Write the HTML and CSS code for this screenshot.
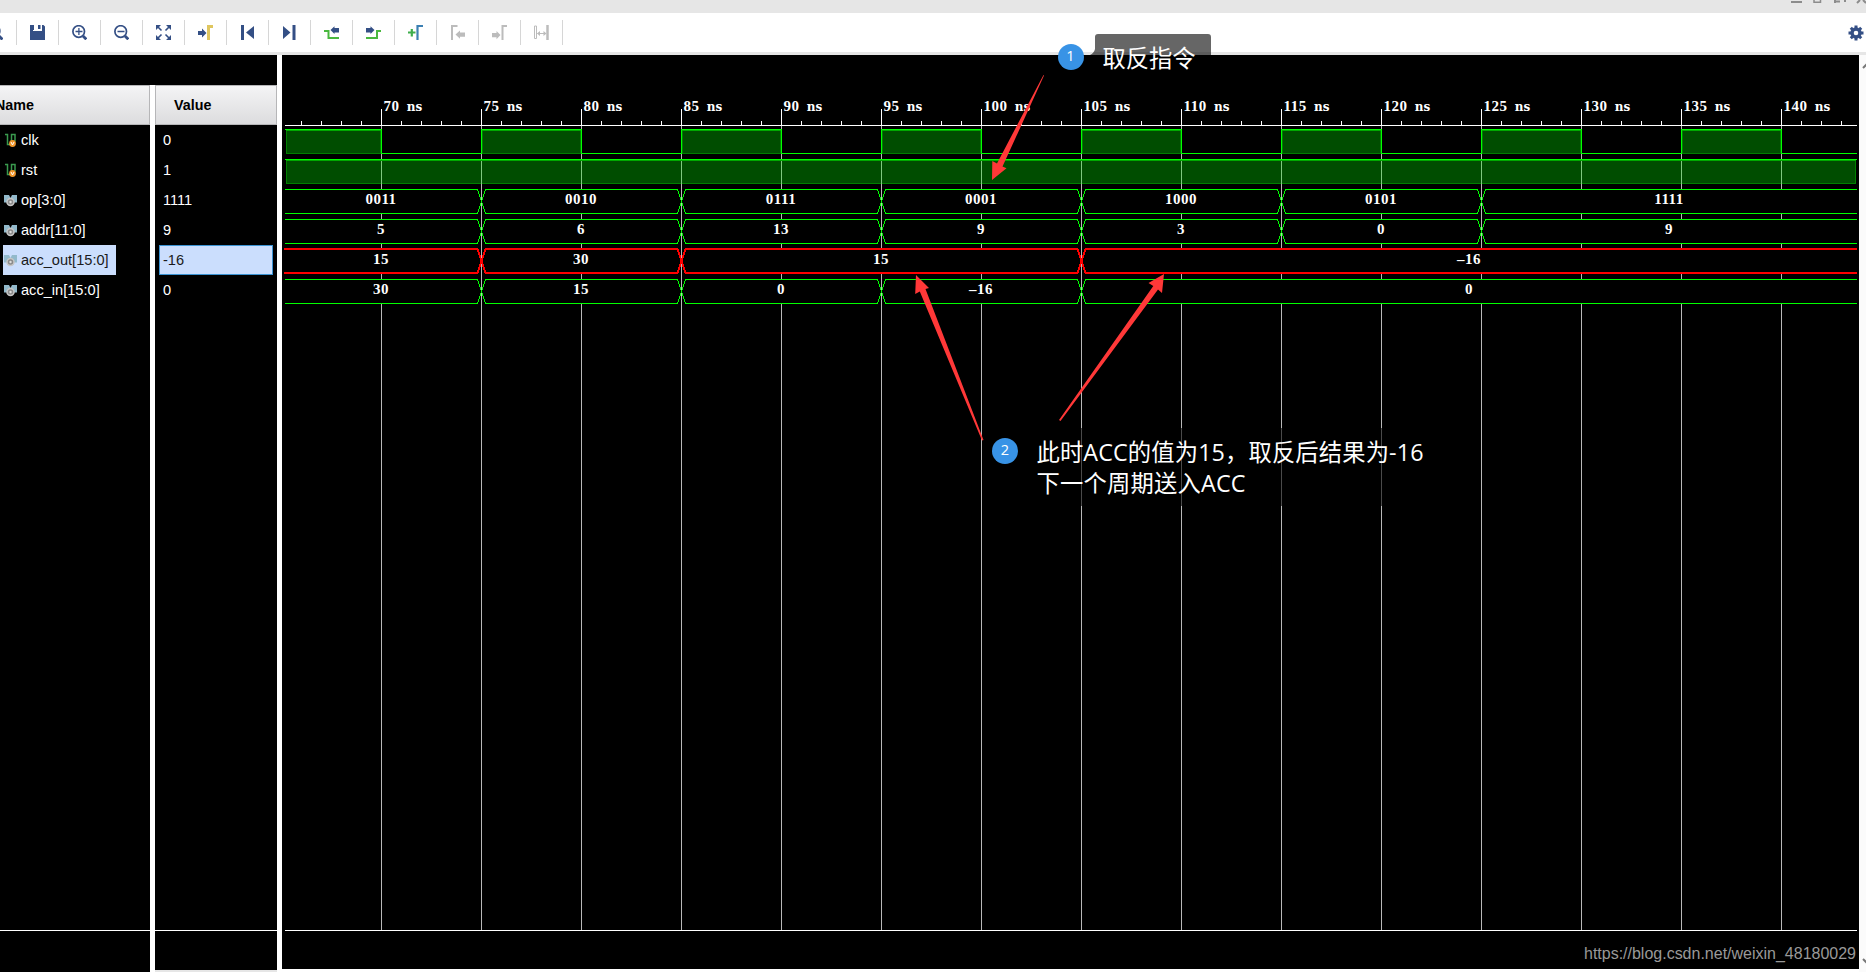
FILE: index.html
```html
<!DOCTYPE html>
<html>
<head>
<meta charset="UTF-8">
<title>Waveform</title>
<link rel="stylesheet" href="styles.css">
</head>
<body>

<div class="titlebar">
	<svg width="76" height="4" viewBox="1790 0 76 4" fill="none" stroke="#8c8c8c">
		<path d="M1791 2h11" stroke-width="2"/>
		<path d="M1814 0v2.3h6.5V0" stroke-width="1.5"/>
		<path d="M1835 1.5h5M1835 0v3M1845 0v2" stroke-width="2"/>
		<path d="M1857 3l3-3M1866 3l-3-3" stroke-width="2"/>
	</svg>
</div>

<div class="toolbar">
	<div class="tool first"><svg width="15" height="15" viewBox="0 0 15 15"><circle cx="6" cy="6" r="5.8" fill="none" stroke="#344f85" stroke-width="1.7"/><path d="M10.5 10.500l4 4" stroke="#344f85" stroke-width="3"/></svg></div>
	<div class="tool"><svg width="15" height="15" viewBox="0 0 15 15"><path d="M0 0h3v6h9V0h1.5L15 1.500V15H0z M8 0h2.500v4H8z M3 0h1v5h-1z" fill="#344f85"/></svg></div>
	<div class="tool"><svg width="15" height="15" viewBox="0 0 15 15"><g fill="none" stroke="#344f85"><circle cx="6.700" cy="6.500" r="5.800" stroke-width="1.700"/><path d="M11 11l3.300 3.300" stroke-width="2.800"/><path d="M3.500 6.500h7M6.900 3v7" stroke-width="1.300"/></g></svg></div>
	<div class="tool"><svg width="15" height="15" viewBox="0 0 15 15"><g fill="none" stroke="#344f85"><circle cx="6.700" cy="6.500" r="5.800" stroke-width="1.700"/><path d="M11 11l3.300 3.300" stroke-width="2.800"/><path d="M3.500 6.500h7" stroke-width="1.500"/></g></svg></div>
	<div class="tool"><svg width="15" height="15" viewBox="0 0 15 15"><path d="M0 0h5L0 5zM15 0h-5l5 5zM0 15h5l-5-5zM15 15h-5l5-5z" fill="#344f85"/><path d="M2 2l3.500 3.500M13 2L9.500 5.500M2 13l3.500-3.500M13 13L9.500 9.500" stroke="#344f85" stroke-width="1.600"/></svg></div>
	<div class="tool"><svg width="15" height="15" viewBox="0 0 15 15"><path d="M0 6h4V3.500l4.500 4.500L4 12.500V10H0z" fill="#344f85"/><path d="M10.500 15V1.500H15" fill="none" stroke="#dfc65f" stroke-width="3"/></svg></div>
	<div class="tool"><svg width="15" height="15" viewBox="0 0 15 15"><path d="M1 0h3v15H1zM14 1v13L6 7.500z" fill="#344f85"/></svg></div>
	<div class="tool"><svg width="15" height="15" viewBox="0 0 15 15"><path d="M10.500 0h3v15h-3zM1 1v13l7.500-6.500z" fill="#344f85"/></svg></div>
	<div class="tool"><svg width="15" height="15" viewBox="0 0 15 15"><path d="M0 6h4.500v7H15" fill="none" stroke="#4ab83f" stroke-width="2"/><path d="M6.500 5l4-3.800V3H15v4.500h-4.500V9z" fill="#344f85"/></svg></div>
	<div class="tool"><svg width="15" height="15" viewBox="0 0 15 15"><path d="M15 6h-4v7H0" fill="none" stroke="#4ab83f" stroke-width="2"/><path d="M8.500 5l-4-3.800V3H0v4.500h4.500V9z" fill="#344f85"/></svg></div>
	<div class="tool"><svg width="15" height="15" viewBox="0 0 15 15"><path d="M0 7.500h7.500M3.800 4v7.500" stroke="#3fae4d" stroke-width="2.200"/><path d="M9.500 15V1H15" fill="none" stroke="#3c80b3" stroke-width="2.200"/></svg></div>
	<div class="tool"><svg width="15" height="15" viewBox="0 0 15 15"><path d="M2 15V1h5.500" fill="none" stroke="#bcbcbc" stroke-width="2"/><path d="M5.500 9.500L10 5.500V7.500h5v4.300h-5v2z" fill="#bcbcbc"/></svg></div>
	<div class="tool"><svg width="15" height="15" viewBox="0 0 15 15"><path d="M10.500 15V1H15" fill="none" stroke="#bcbcbc" stroke-width="2"/><path d="M8.500 10L4.500 6v2H0v4.200h4.500v2z" fill="#bcbcbc"/></svg></div>
	<div class="tool"><svg width="15" height="15" viewBox="0 0 15 15"><path d="M.5 1h2v12.500h-2zM3.500 8.500h8" fill="none" stroke="#bcbcbc"/><path d="M13.500 0v15" stroke="#bcbcbc" stroke-width="2.500"/><path d="M3 8.500L6 6v5zM12.500 8.500L9.500 6v5z" fill="#bcbcbc"/></svg></div>
	<svg class="gear" width="16" height="16" viewBox="-8 -8 16 16"><circle r="4" fill="none" stroke="#344f85" stroke-width="3.400"/><path d="M0-7.500V-5M0 5v2.500M-7.500 0H-5M5 0h2.500M-5.200-5.200L-3.500-3.500M5.200 5.200L3.500 3.500M-5.200 5.200L-3.500 3.500M5.200-5.200L3.500-3.500" stroke="#344f85" stroke-width="3"/></svg>
</div>

<div class="main">
	<div class="signals">
		<div class="names">
			<div class="head">Name</div>
			<div class="row"><svg class="ico" width="13" height="16" viewBox="0 0 13 16"><use href="#wire"/></svg><span>clk</span></div>
			<div class="row"><svg class="ico" width="13" height="16" viewBox="0 0 13 16"><use href="#wire"/></svg><span>rst</span></div>
			<div class="row"><svg class="ico" width="13" height="16" viewBox="0 0 13 16"><use href="#bus"/></svg><span>op[3:0]</span></div>
			<div class="row"><svg class="ico" width="13" height="16" viewBox="0 0 13 16"><use href="#bus"/></svg><span>addr[11:0]</span></div>
			<div class="row selected"><svg class="ico" width="13" height="16" viewBox="0 0 13 16"><use href="#bus"/></svg><span>acc_out[15:0]</span></div>
			<div class="row"><svg class="ico" width="13" height="16" viewBox="0 0 13 16"><use href="#bus"/></svg><span>acc_in[15:0]</span></div>
			<div class="foot"></div>
		</div>
		<div class="values">
			<div class="head">Value</div>
			<div class="row">0</div>
			<div class="row">1</div>
			<div class="row">1111</div>
			<div class="row">9</div>
			<div class="row selected">-16</div>
			<div class="row">0</div>
			<div class="foot"></div>
		</div>
	</div>

	<div class="wave">
		<svg id="wave" width="1577" height="914" viewBox="282 55 1577 914"></svg>
	</div>

	<div class="scroll">
		<svg width="7" height="914" viewBox="0 0 7 914" fill="none" stroke="#777" stroke-width="2"><path d="M4 13l4-4M4 904l4 4"/></svg>
	</div>
</div>

<!-- annotations drawn over the whole window -->
<svg class="notes" width="1866" height="972">
	<g fill="#000" fill-opacity=".6">
		<path d="M1098 34h110a3 3 0 0 1 3 3v46h-116V55h-5q4-2 5-6V37a3 3 0 0 1 3-3z"/>
		<rect x="1026" y="428" width="412" height="78" rx="3"/>
	</g>
	<g fill="#ff3838">
		<path d="M992 180L992.300 161L997 163.500L1043.500 75L1044 75.500L1002.500 166.500L1006.500 168.300z"/>
		<path d="M916 275L915.200 294L919.800 291.500L982 440.500L983.500 440L925.500 289L929 288z"/>
		<path d="M1164 274L1148.500 283L1153.300 286L1059 420L1060.500 421L1158 289.500L1162 293z"/>
	</g>
	<circle cx="1071" cy="57" r="13" fill="#3893e6"/>
	<circle cx="1005" cy="451" r="13" fill="#3893e6"/>
	<text class="num" x="1070.500" y="61">1</text>
	<text class="num" x="1005" y="455">2</text>
	<text class="note" x="1102.500" y="67" textLength="93">取反指令</text>
	<text class="note" x="1036.500" y="461" textLength="387">此时ACC的值为15，取反后结果为-16</text>
	<text class="note" x="1036.500" y="492" textLength="209">下一个周期送入ACC</text>
	<text class="mark" x="1584" y="959" textLength="272">https://blog.csdn.net/weixin_48180029</text>
</svg>

<svg class="defs">
	<symbol id="wire" viewBox="0 0 13 16"><path d="M1 2.500h2.500v10h4v-10h3.500v7" fill="none" stroke="#3a9a4e" stroke-width="1.500"/><circle cx="8.500" cy="11.500" r="3.400" fill="#f0952a"/><path d="M7 10l1.500 3L10 10" fill="none" stroke="#fff"/></symbol>
	<symbol id="bus" viewBox="0 0 13 16"><path d="M0 3h5l1.500 3L8 3h5v7.500H0z" fill="#92b9cb"/><circle cx="6.500" cy="10" r="3.500" fill="#8a8a8a" stroke="#c6c6c6" stroke-width="1.500"/><circle cx="6.500" cy="10" r="1.200" fill="#ddd"/></symbol>
</svg>

<script>
var END = 1857
var out = ""

function box(x, y, w, h, color){
	out += `<rect x="${x}" y="${y}" width="${w}" height="${h}" fill="${color}"/>`
}

function grid(){
	for (var x = 381; x < END; x += 100) box(x, 126, 1, 804, "#b9b9b9")
}

function ruler(){
	box(285, 125, 1572, 1, "#fff")
	box(285, 930, 1572, 1, "#fff")
	for (var x = 301; x < END; x += 20) box(x, 121, 1, 4, "#fff")
	for (var i = 0; i < 15; i++){
		var left = 381 + i * 100
		box(left, 109, 1, 16, "#fff")
		out += `<text class="lbl" x="${left + 2.5}" y="111">${70 + i * 5} <tspan class="unit">ns</tspan></text>`
	}
}

// filled block for a signal that is high
function high(x1, x2, y){
	box(x1, y, x2 - x1, 25, "#008000")
	box(x1 + 1, y + 1, x2 - x1 - 2, 23, "#004d00")
	box(x1, y + 1, x2 - x1, 1, "#00a800")
	box(x1 - 1, y, x2 - x1 + 2, 1, "#00ff00")
}

function clk(){
	high(286, 381, 129)
	box(381, 129, 1, 25, "#00ff00")
	for (var x = 481; x < END; x += 200){
		high(x + 1, x + 100, 129)
		box(x, 129, 1, 25, "#00ff00")
		box(x + 100, 129, 1, 25, "#00ff00")
	}
	for (x = 381; x < END; x += 200) box(x, 153, Math.min(100, END - x), 1, "#00ff00")
}

function rst(){
	high(286, 1856, 159)
	for (var x = 381; x < END; x += 100) box(x, 161, 1, 23, "#7fc87f")
}

function bus(y, edges, values, color, w){
	var left = 281
	var start = w == 2 ? 284 : 285
	// a 2px stroke sits on whole pixels, a 1px one on halves
	var t = w == 2 ? y : y + .5
	var b = t + 24, m = t + 12
	edges = edges.concat([END])
	for (var i = 0; i < edges.length; i++){
		var right = edges[i]
		var first = i == 0, last = right == END
		var x1 = first ? start : left + 4.5
		var x2 = last ? right : right - 3.5
		var topLine = (first ? "" : `M${left + .5} ${m}`) + `${first ? "M" : "L"}${x1} ${t}L${x2} ${t}` + (last ? "" : `L${right + .5} ${m}`)
		var lowLine = (first ? "" : `M${left + .5} ${m}`) + `${first ? "M" : "L"}${x1} ${b}L${x2} ${b}` + (last ? "" : `L${right + .5} ${m}`)
		out += `<path fill="#000" d="${topLine}L${x2} ${b}L${x1} ${b}z"/>`
		out += `<path class="trace" stroke="${color}" stroke-width="${w}" d="${topLine}${lowLine}"/>`
		out += `<text class="lbl mid" x="${(left + right) / 2}" y="${y + 15}">${values[i]}</text>`
		left = right
	}
}

grid()
ruler()
clk()
rst()
bus(189, [481, 681, 881, 1081, 1281, 1481], ["0011", "0010", "0111", "0001", "1000", "0101", "1111"], "#00ff00", 1)
bus(219, [481, 681, 881, 1081, 1281, 1481], ["5", "6", "13", "9", "3", "0", "9"], "#00ff00", 1)
bus(249, [481, 681, 1081], ["15", "30", "15", "–16"], "#ff0000", 2)
bus(279, [481, 681, 881, 1081], ["30", "15", "0", "–16", "0"], "#00ff00", 1)

document.querySelector("#wave").innerHTML = out
</script>

</body>
</html>
```
FILE: styles.css
```css
* {box-sizing: border-box}

body {
	margin: 0;
	width: 1866px;
	height: 972px;
	overflow: hidden;
	background: #fff;
	font-family: "Liberation Sans", Arial, sans-serif;
	font-size: 14.6px;
	position: relative;
}

svg {display: block}

.titlebar {
	height: 13px;
	background: #e6e6e6;
	display: flex;
	justify-content: flex-end;
}

.toolbar {
	height: 42px;
	background: #fff;
	border-bottom: 3px solid #e6e6e6;
	display: flex;
	align-items: center;
}

.tool {
	width: 42px;
	height: 25px;
	border-right: 1px solid #d6d6d6;
	display: flex;
	align-items: center;
	justify-content: center;
	flex: none;
}

.tool.first {
	width: 17px;
	justify-content: flex-end;
	padding-right: 13px;
	overflow: hidden;
}

.tool.first svg {flex: none}

.gear {
	margin-left: auto;
	margin-right: 2px;
}

.main {
	display: flex;
	height: 917px;
}

.signals {
	width: 277px;
	height: 917px;
	display: flex;
	gap: 5px;
	border-top: 30px solid #000;
	margin-right: 5px;
}

.names, .values {
	background: #000;
	color: #fff;
	display: flex;
	flex-direction: column;
}

.names {width: 150px}

.values {
	width: 122px;
	border-bottom: 2px solid #e6e6e6;
}

.head {
	height: 40px;
	border: 1px solid #b6b6b8;
	background: linear-gradient(#f4f4f5, #dcdcde);
	color: #000;
	font-weight: bold;
	font-size: 14.3px;
	line-height: 38px;
	padding-left: 18px;
}

.names .head {
	border-left: 0;
	padding-left: 0;
	text-indent: -5px;
}

.row {
	height: 30px;
	line-height: 30px;
	white-space: nowrap;
}

.names .row {
	display: flex;
	align-items: center;
	gap: 4px;
	padding: 0 7px 0 1px;
	margin-left: 3px;
	align-self: flex-start;
}

.values .row {
	margin: 0 4px;
	padding-left: 4px;
}

.row.selected {
	background: #cbdefd;
	color: #1a1a1a;
}

.values .row.selected {
	border: 1px solid #3b93d3;
	padding-left: 3px;
	line-height: 28px;
}

.foot {
	margin-top: 625px;
	border-top: 1px solid #fff;
}

.wave {
	width: 1577px;
	height: 914px;
	background: #000;
}

.scroll {
	width: 7px;
	background: #fbfbfb;
}

#wave rect, .trace {shape-rendering: crispEdges}

.trace {fill: none}

.lbl {
	font: bold 15px "Liberation Serif", serif;
	letter-spacing: .5px;
	word-spacing: 3px;
	fill: #fff;
}

.unit {
	font: bold 12px "DejaVu Serif", serif;
	letter-spacing: 0;
}

.mid {text-anchor: middle}

.notes {
	position: absolute;
	left: 0;
	top: 0;
}

.num {
	font: 14.5px "Open Sans", sans-serif;
	fill: #fff;
	text-anchor: middle;
}

.note {
	font: 23.3px "Open Sans", "Noto Sans CJK SC", sans-serif;
	fill: #fff;
}

.mark {
	font: 16px "Liberation Sans", Arial, sans-serif;
	fill: #999;
}

.defs {
	position: absolute;
	width: 0;
	height: 0;
}
```
